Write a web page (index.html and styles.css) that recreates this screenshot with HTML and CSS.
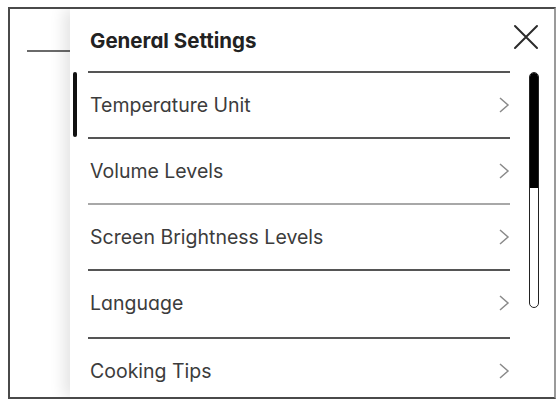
FILE: index.html
```html
<!DOCTYPE html>
<html lang="en">
<head>
<meta charset="utf-8">
<title>General Settings</title>
<link rel="stylesheet" href="styles.css">
</head>
<body>
<div class="frame">
  <div class="backdrop">
    <div class="back-line"></div>
  </div>
  <section class="panel">
    <header class="header">
      <h1 class="title">General Settings</h1>
      <button class="close" aria-label="Close">
        <svg width="26" height="26" viewBox="0 0 26 26"><path d="M2 2 L24 24 M24 2 L2 24" stroke="#2b2b2b" stroke-width="2" stroke-linecap="round" fill="none"/></svg>
      </button>
    </header>
    <div class="body">
      <div class="indicator-col"><div class="indicator"></div></div>
      <ul class="list">
        <li class="row"><span class="label">Temperature Unit</span><svg class="chev" width="12" height="16" viewBox="0 0 12 16"><polyline points="2,1 10,8 2,15" fill="none" stroke="#8a8a8a" stroke-width="1.5"/></svg></li>
        <li class="row"><span class="label">Volume Levels</span><svg class="chev" width="12" height="16" viewBox="0 0 12 16"><polyline points="2,1 10,8 2,15" fill="none" stroke="#8a8a8a" stroke-width="1.5"/></svg></li>
        <li class="row light"><span class="label">Screen Brightness Levels</span><svg class="chev" width="12" height="16" viewBox="0 0 12 16"><polyline points="2,1 10,8 2,15" fill="none" stroke="#8a8a8a" stroke-width="1.5"/></svg></li>
        <li class="row"><span class="label">Language</span><svg class="chev" width="12" height="16" viewBox="0 0 12 16"><polyline points="2,1 10,8 2,15" fill="none" stroke="#8a8a8a" stroke-width="1.5"/></svg></li>
        <li class="row last"><span class="label">Cooking Tips</span><svg class="chev" width="12" height="16" viewBox="0 0 12 16"><polyline points="2,1 10,8 2,15" fill="none" stroke="#8a8a8a" stroke-width="1.5"/></svg></li>
      </ul>
      <div class="scroll-col">
        <div class="scrollbar"><div class="thumb"></div></div>
      </div>
    </div>
  </section>
</div>
</body>
</html>
```
FILE: styles.css
```css
html, body {
  margin: 0;
  padding: 0;
  background: #ffffff;
}
body {
  font-family: "Inter", "Noto Sans", sans-serif;
  font-feature-settings: "cv11" 1;
  color: #333;
}
.frame {
  box-sizing: border-box;
  width: 548px;
  height: 392px;
  margin: 7px 0 0 8px;
  border: 2px solid #4a4a4a;
  border-right-color: #9a9a9a;
  display: flex;
  overflow: hidden;
  background: #fff;
}
.backdrop {
  width: 60px;
  flex: none;
  background: #fff;
}
.back-line {
  margin: 41px 0 0 17px;
  height: 2px;
  background: #6a6a6a;
}
.panel {
  flex: 1;
  display: flex;
  flex-direction: column;
  background: #fff;
  box-shadow: -6px 0 14px rgba(0, 0, 0, 0.11);
  position: relative;
  z-index: 1;
}
.header {
  height: 62px;
  flex: none;
  display: flex;
  align-items: center;
  justify-content: space-between;
  padding-left: 20px;
  padding-right: 15px;
}
.title {
  margin: 0;
  font-size: 20.5px;
  font-weight: 700;
  color: #222;
  letter-spacing: 0;
}
.close {
  border: 0;
  background: none;
  padding: 0;
  width: 26px;
  height: 26px;
  margin-bottom: 6px;
  display: flex;
}
.body {
  flex: 1;
  display: grid;
  grid-template-columns: 18px 422px 1fr;
  min-height: 0;
}
.indicator-col {
  padding-left: 3px;
  padding-top: 1px;
}
.indicator {
  width: 4px;
  height: 65px;
  background: #111;
  border-radius: 2px;
}
.list {
  list-style: none;
  margin: 0;
  padding: 0;
}
.row {
  box-sizing: border-box;
  height: 66px;
  border-top: 2px solid #555;
  display: flex;
  align-items: center;
  justify-content: space-between;
  padding-left: 2px;
}
.row.light {
  border-top-color: #a8a8a8;
}
.row.last {
  margin-top: 2px;
}
.label {
  font-size: 19.5px;
  color: #3c3c3c;
}
.chev {
  display: block;
}
.scroll-col {
  padding-left: 19px;
  padding-top: 1px;
}
.scrollbar {
  box-sizing: border-box;
  width: 10px;
  height: 236px;
  border: 1.5px solid #222;
  border-radius: 6px;
  overflow: hidden;
}
.thumb {
  height: 115px;
  background: #000;
}
```
